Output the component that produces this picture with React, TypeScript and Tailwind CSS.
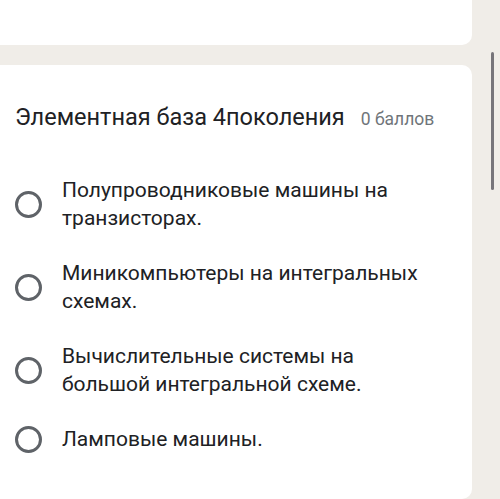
import React from 'react'

const options = [
  ['Полупроводниковые машины на', 'транзисторах.'],
  ['Миникомпьютеры на интегральных', 'схемах.'],
  ['Вычислительные системы на', 'большой интегральной схеме.'],
  ['Ламповые машины.'],
]

function Radio() {
  return (
    <div className="mt-[1px] h-[27px] w-[27px] shrink-0 rounded-full border-[3px] border-[#5f6368]" />
  )
}

export default function App() {
  return (
    <div className="relative flex h-[499px] w-[500px] overflow-hidden bg-[#f0ede8] font-['Roboto',sans-serif]">
      <div className="flex w-[472px] flex-col gap-[20px]">
        <div className="h-[45px] rounded-br-[10px] bg-white" />
        <div className="flex-1 rounded-tr-[10px] rounded-br-[10px] bg-white pl-[15px] pt-[38px]">
          <div className="flex items-baseline">
            <span className="text-[23.5px] leading-[28px] text-[#202124]">
              Элементная база 4поколения
            </span>
            <span className="ml-[16px] text-[17.5px] text-[#70757a]">0 баллов</span>
          </div>
          <div className="mt-[44px] flex flex-col gap-[27px]">
            {options.map((lines, i) => (
              <div key={i} className="flex items-center gap-[20px]">
                <Radio />
                <div className="text-[21px] leading-[28px] text-[#202124]">
                  {lines.map((l) => (
                    <div key={l}>{l}</div>
                  ))}
                </div>
              </div>
            ))}
          </div>
        </div>
      </div>
      <div className="relative flex-1">
        <div className="absolute left-[19px] top-[52px] h-[138px] w-[3px] rounded-full bg-[#77757a]" />
      </div>
    </div>
  )
}
